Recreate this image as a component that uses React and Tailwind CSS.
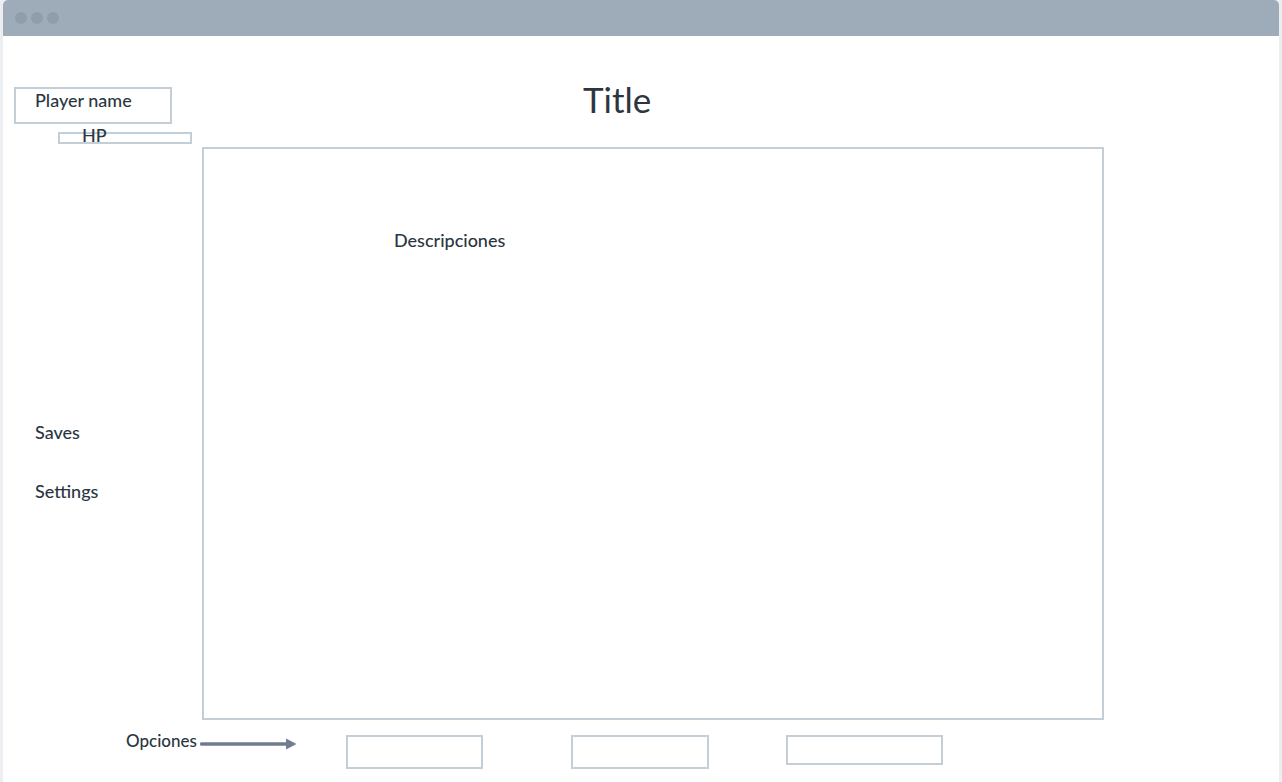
import React from 'react';

const line = 'border-2 border-[#c4ced6]';

const App = () => {
  return (
    <div className="h-[782px] bg-[#eceef1] px-[3px] font-['Lato',sans-serif] text-[#2b3641] overflow-hidden">
      <div className="h-full bg-white rounded-t-[5px] flex flex-col">
        {/* window bar */}
        <div className="h-[36px] shrink-0 bg-[#9eacb9] rounded-t-[5px] flex items-center gap-[4px] pl-[12px]">
          <span className="w-[12px] h-[12px] rounded-full bg-[#909eac]" />
          <span className="w-[12px] h-[12px] rounded-full bg-[#909eac]" />
          <span className="w-[12px] h-[12px] rounded-full bg-[#909eac]" />
        </div>

        <div className="flex">
          {/* left column */}
          <aside className="w-[199px] shrink-0 text-[18px] leading-[20px] font-medium">
            <div className={`${line} mt-[51px] ml-[11px] w-[158px] h-[37px] pl-[19px] pt-[1px]`}>Player name</div>
            <div className={`${line} mt-[8px] ml-[55px] w-[134px] h-[12px] pl-[22px]`}>
              <p className="-mt-[9px]">HP</p>
            </div>
            <p className="mt-[278px] ml-[32px]">Saves</p>
            <p className="mt-[39px] ml-[32px]">Settings</p>
          </aside>

          {/* center */}
          <main className="w-[902px]">
            <h1 className="mt-[43px] ml-[381px] text-[35px] leading-[40px]">Title</h1>
            <div className={`${line} mt-[28px] h-[573px]`}>
              <p className="mt-[81px] ml-[190px] text-[18px] leading-[20px] font-medium">Descripciones</p>
            </div>
          </main>
        </div>

        {/* bottom row */}
        <div className="flex items-start">
          <p className="w-[74px] ml-[123px] mt-[11px] text-[17px] leading-[20px] font-medium whitespace-nowrap">Opciones</p>
          <svg width="97" height="12" viewBox="0 0 97 12" className="mt-[18px]">
            <line x1="1.5" y1="6" x2="87" y2="6" stroke="#6e7e8e" strokeWidth="3.5" strokeLinecap="round" />
            <path d="M86 0.5 L96.5 6 L86 11.5 Z" fill="#6e7e8e" />
          </svg>
          <div className={`${line} ml-[49px] mt-[15px] w-[137px] h-[34px]`} />
          <div className={`${line} ml-[88px] mt-[15px] w-[138px] h-[34px]`} />
          <div className={`${line} ml-[77px] mt-[15px] w-[157px] h-[30px]`} />
        </div>
      </div>
    </div>
  );
};

export default App;
